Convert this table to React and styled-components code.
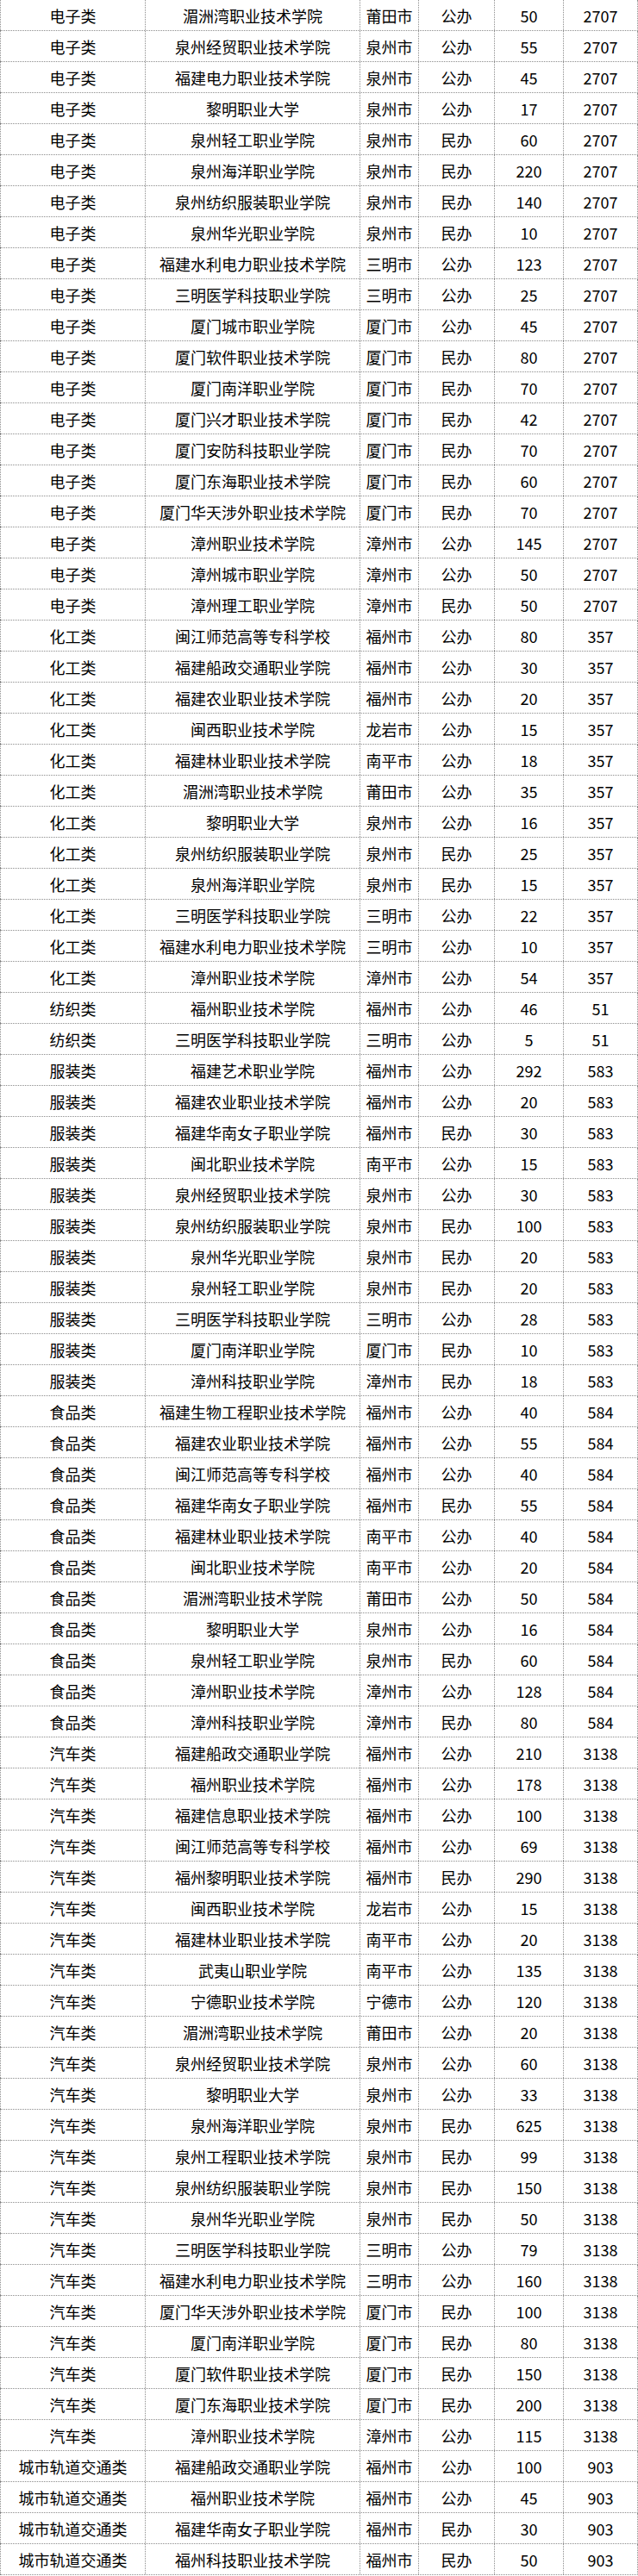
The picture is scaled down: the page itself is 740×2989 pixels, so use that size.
import styled, { createGlobalStyle } from 'styled-components';

const GlobalStyle = createGlobalStyle`
  html, body {
    margin: 0;
    padding: 0;
    background: #fff;
  }
  body {
    font-family: "Noto Sans CJK SC", "Noto Sans", sans-serif;
    color: #000;
  }
`;

// [major, school, city, type, plan, total]
const groups = [
  {
    major: '电子类',
    total: 2707,
    rows: [
      ['湄洲湾职业技术学院', '莆田市', '公办', 50],
      ['泉州经贸职业技术学院', '泉州市', '公办', 55],
      ['福建电力职业技术学院', '泉州市', '公办', 45],
      ['黎明职业大学', '泉州市', '公办', 17],
      ['泉州轻工职业学院', '泉州市', '民办', 60],
      ['泉州海洋职业学院', '泉州市', '民办', 220],
      ['泉州纺织服装职业学院', '泉州市', '民办', 140],
      ['泉州华光职业学院', '泉州市', '民办', 10],
      ['福建水利电力职业技术学院', '三明市', '公办', 123],
      ['三明医学科技职业学院', '三明市', '公办', 25],
      ['厦门城市职业学院', '厦门市', '公办', 45],
      ['厦门软件职业技术学院', '厦门市', '民办', 80],
      ['厦门南洋职业学院', '厦门市', '民办', 70],
      ['厦门兴才职业技术学院', '厦门市', '民办', 42],
      ['厦门安防科技职业学院', '厦门市', '民办', 70],
      ['厦门东海职业技术学院', '厦门市', '民办', 60],
      ['厦门华天涉外职业技术学院', '厦门市', '民办', 70],
      ['漳州职业技术学院', '漳州市', '公办', 145],
      ['漳州城市职业学院', '漳州市', '公办', 50],
      ['漳州理工职业学院', '漳州市', '民办', 50],
    ],
  },
  {
    major: '化工类',
    total: 357,
    rows: [
      ['闽江师范高等专科学校', '福州市', '公办', 80],
      ['福建船政交通职业学院', '福州市', '公办', 30],
      ['福建农业职业技术学院', '福州市', '公办', 20],
      ['闽西职业技术学院', '龙岩市', '公办', 15],
      ['福建林业职业技术学院', '南平市', '公办', 18],
      ['湄洲湾职业技术学院', '莆田市', '公办', 35],
      ['黎明职业大学', '泉州市', '公办', 16],
      ['泉州纺织服装职业学院', '泉州市', '民办', 25],
      ['泉州海洋职业学院', '泉州市', '民办', 15],
      ['三明医学科技职业学院', '三明市', '公办', 22],
      ['福建水利电力职业技术学院', '三明市', '公办', 10],
      ['漳州职业技术学院', '漳州市', '公办', 54],
    ],
  },
  {
    major: '纺织类',
    total: 51,
    rows: [
      ['福州职业技术学院', '福州市', '公办', 46],
      ['三明医学科技职业学院', '三明市', '公办', 5],
    ],
  },
  {
    major: '服装类',
    total: 583,
    rows: [
      ['福建艺术职业学院', '福州市', '公办', 292],
      ['福建农业职业技术学院', '福州市', '公办', 20],
      ['福建华南女子职业学院', '福州市', '民办', 30],
      ['闽北职业技术学院', '南平市', '公办', 15],
      ['泉州经贸职业技术学院', '泉州市', '公办', 30],
      ['泉州纺织服装职业学院', '泉州市', '民办', 100],
      ['泉州华光职业学院', '泉州市', '民办', 20],
      ['泉州轻工职业学院', '泉州市', '民办', 20],
      ['三明医学科技职业学院', '三明市', '公办', 28],
      ['厦门南洋职业学院', '厦门市', '民办', 10],
      ['漳州科技职业学院', '漳州市', '民办', 18],
    ],
  },
  {
    major: '食品类',
    total: 584,
    rows: [
      ['福建生物工程职业技术学院', '福州市', '公办', 40],
      ['福建农业职业技术学院', '福州市', '公办', 55],
      ['闽江师范高等专科学校', '福州市', '公办', 40],
      ['福建华南女子职业学院', '福州市', '民办', 55],
      ['福建林业职业技术学院', '南平市', '公办', 40],
      ['闽北职业技术学院', '南平市', '公办', 20],
      ['湄洲湾职业技术学院', '莆田市', '公办', 50],
      ['黎明职业大学', '泉州市', '公办', 16],
      ['泉州轻工职业学院', '泉州市', '民办', 60],
      ['漳州职业技术学院', '漳州市', '公办', 128],
      ['漳州科技职业学院', '漳州市', '民办', 80],
    ],
  },
  {
    major: '汽车类',
    total: 3138,
    rows: [
      ['福建船政交通职业学院', '福州市', '公办', 210],
      ['福州职业技术学院', '福州市', '公办', 178],
      ['福建信息职业技术学院', '福州市', '公办', 100],
      ['闽江师范高等专科学校', '福州市', '公办', 69],
      ['福州黎明职业技术学院', '福州市', '民办', 290],
      ['闽西职业技术学院', '龙岩市', '公办', 15],
      ['福建林业职业技术学院', '南平市', '公办', 20],
      ['武夷山职业学院', '南平市', '公办', 135],
      ['宁德职业技术学院', '宁德市', '公办', 120],
      ['湄洲湾职业技术学院', '莆田市', '公办', 20],
      ['泉州经贸职业技术学院', '泉州市', '公办', 60],
      ['黎明职业大学', '泉州市', '公办', 33],
      ['泉州海洋职业学院', '泉州市', '民办', 625],
      ['泉州工程职业技术学院', '泉州市', '民办', 99],
      ['泉州纺织服装职业学院', '泉州市', '民办', 150],
      ['泉州华光职业学院', '泉州市', '民办', 50],
      ['三明医学科技职业学院', '三明市', '公办', 79],
      ['福建水利电力职业技术学院', '三明市', '公办', 160],
      ['厦门华天涉外职业技术学院', '厦门市', '民办', 100],
      ['厦门南洋职业学院', '厦门市', '民办', 80],
      ['厦门软件职业技术学院', '厦门市', '民办', 150],
      ['厦门东海职业技术学院', '厦门市', '民办', 200],
      ['漳州职业技术学院', '漳州市', '公办', 115],
    ],
  },
  {
    major: '城市轨道交通类',
    total: 903,
    rows: [
      ['福建船政交通职业学院', '福州市', '公办', 100],
      ['福州职业技术学院', '福州市', '公办', 45],
      ['福建华南女子职业学院', '福州市', '民办', 30],
      ['福州科技职业技术学院', '福州市', '民办', 50],
    ],
  },
];

const Table = styled.div`
  width: 740px;
  display: flex;
  flex-direction: column;
`;

const Row = styled.div`
  display: grid;
  grid-template-columns: 168px 249px 68px 88px 80px 86px;
  height: 36px;
  box-sizing: border-box;
  border-bottom: 1px dotted #8c8c8c;
  border-right: 1px dotted #8c8c8c;
`;

const Cell = styled.div`
  display: flex;
  align-items: center;
  justify-content: center;
  border-left: 1px dotted #8c8c8c;
  font-size: 18px;
  line-height: 1;
  white-space: nowrap;
  overflow: hidden;
  padding-top: 1px;
`;

export default function App() {
  return (
    <>
      <GlobalStyle />
      <Table>
        {groups.map((g) =>
          g.rows.map(([school, city, type, plan], i) => (
            <Row key={`${g.major}-${i}`}>
              <Cell>{g.major}</Cell>
              <Cell>{school}</Cell>
              <Cell>{city}</Cell>
              <Cell>{type}</Cell>
              <Cell>{plan}</Cell>
              <Cell>{g.total}</Cell>
            </Row>
          ))
        )}
      </Table>
    </>
  );
}
